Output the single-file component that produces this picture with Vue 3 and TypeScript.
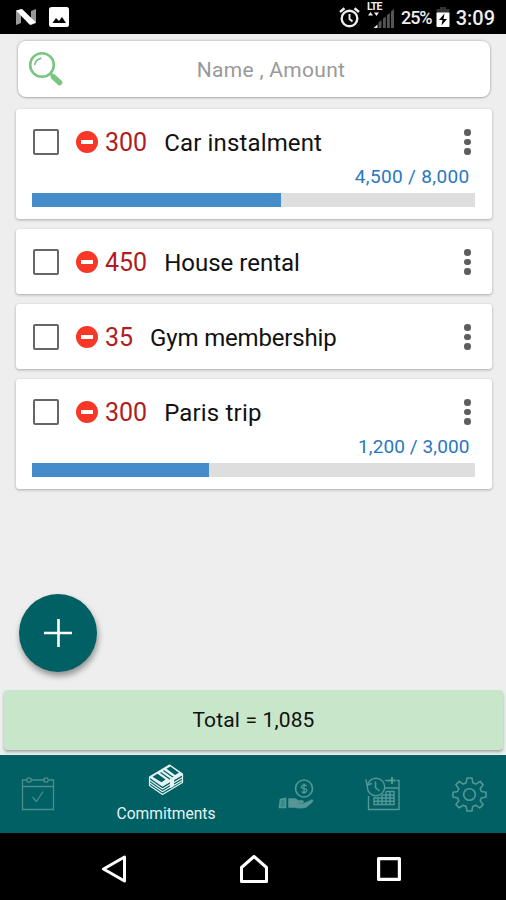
<script setup lang="ts">
interface Commitment {
  amount: string
  name: string
  kind: 'car' | 'house' | 'gym' | 'trip'
  paid?: number
  total?: number
}

const commitments: Commitment[] = [
  { amount: '300', name: 'Car instalment', kind: 'car', paid: 4500, total: 8000 },
  { amount: '450', name: 'House rental', kind: 'house' },
  { amount: '35', name: 'Gym membership', kind: 'gym' },
  { amount: '300', name: 'Paris trip', kind: 'trip', paid: 1200, total: 3000 },
]

const format = (n: number): string => n.toLocaleString('en-US')
const percent = (c: Commitment): string => `${((c.paid ?? 0) / (c.total ?? 1)) * 100}%`
</script>

<template>
  <div class="screen">
    <header class="status">
      <svg class="status-n" viewBox="0 0 22 18" width="22" height="18">
        <path d="M1 3l5-2v14l-5 2zM16 3l5-2v14l-5 2z" fill="#999" />
        <path d="M1 2.500L7 1l14 13.500L15 17z" fill="#fff" />
      </svg>
      <svg class="status-pic" viewBox="0 0 20 20" width="20" height="20">
        <rect width="20" height="20" rx="2.500" fill="#fff" />
        <path d="M3.500 16l3.500-5 3 3 3-4 4 6z" fill="#000" />
      </svg>
      <span class="grow"></span>
      <svg class="alarm" viewBox="0 0 21 21" width="21" height="21" fill="none" stroke="#eee">
        <circle cx="10.500" cy="11.500" r="7.800" stroke-width="2.400" />
        <path d="M10.500 7v5l3 2.500" stroke-width="1.900" />
        <path d="M1 5l4.500-3.700M20 5l-4.500-3.700" stroke-width="2.400" />
      </svg>
      <span class="signal">
        <svg viewBox="0 0 28 26" width="28" height="26">
          <path d="M6.500 26l4-3.500V26zM1 13.500l2.500-3.500L6 13.500zM7 10.500h5l-2.500 3.500z" fill="#eee" />
          <path d="M11.500 20.500l3-2.500v8h-3zM16 16.500l2.800-2v11.500H16zM20 13l2.800-2v15H20zM24 9.500l3-2.500v19h-3z" fill="#555" />
        </svg>
        <b class="lte">LTE</b>
      </span>
      <span class="battery-text">25%</span>
      <svg class="battery" viewBox="0 0 14 22" width="14" height="22">
        <path d="M4 1h6v2h3.500v4H.5V3H4z" fill="#333" />
        <rect x=".5" y="6.500" width="13" height="14.500" rx="1" fill="#fff" />
        <path d="M8.500 7.500L3 14h3.500L5.500 19.500 11 13H7.500z" fill="#000" />
      </svg>
      <span class="clock">3:09</span>
    </header>

    <main class="content">
      <div class="search">
        <svg class="magnifier" viewBox="0 0 36 36" width="36" height="36" fill="none" stroke="#7ac581">
          <circle cx="14" cy="14" r="11.800" stroke-width="2.600" />
          <path d="M6.800 13.500Q7.500 8.500 12.800 7.300" stroke-width="1.700" stroke-linecap="round" />
          <path d="M22.500 22.500l3 3" stroke-width="3" />
          <path d="M25.500 26l6 5.500" stroke-width="5.600" stroke-linecap="round" />
        </svg>
        <span class="placeholder">Name , Amount</span>
      </div>

      <section class="list">
        <article v-for="c in commitments" :key="c.name" class="card">
          <div class="row">
            <span class="checkbox"></span>
            <span class="minus"></span>
            <span class="amount">{{ c.amount }}</span>
            <span class="name" :class="c.kind">{{ c.name }}</span>
            <span class="grow"></span>
            <span class="dots"><i></i><i></i><i></i></span>
          </div>
          <template v-if="c.total && c.paid">
            <div class="figures" :class="c.kind">{{ format(c.paid) }} / {{ format(c.total) }}</div>
            <div class="track"><div class="fill" :style="{ width: percent(c) }"></div></div>
          </template>
        </article>
      </section>

      <span class="grow"></span>
      <div class="fab">
        <svg viewBox="0 0 28 28" width="28" height="28" stroke="#fff" stroke-width="2.600">
          <path d="M14.500 0v28M0 14h28" />
        </svg>
      </div>
      <div class="total">Total = 1,085</div>
    </main>

    <nav class="tabs">
      <div class="tab tab-calendar">
        <svg viewBox="0 0 34 36" width="34" height="36" fill="none" stroke="#4c8d8d" stroke-width="1.300">
          <path d="M6 4H1.500v29.500h31V4H28M10 4h14M1.500 10.500h31" />
          <circle cx="8" cy="4" r="2.200" />
          <circle cx="25" cy="4" r="2.200" />
          <path d="M11.500 21l4 4.500 6.500-10" />
        </svg>
      </div>
      <div class="tab tab-active">
        <svg viewBox="0 0 36 34" width="36" height="34" fill="none" stroke="#e6f3f3" stroke-width="1.200" stroke-linejoin="round">
          <path d="M1.500 14L21.500 2 34.500 11 14.500 23z" fill="#e6f3f3" />
          <path d="M4.500 13.800l5-3 8 5.700-4 2.800zM18.500 5.700l4-2.200 8.500 6.200-4 2.400z" fill="#006064" stroke="none" />
          <path d="M12.500 9.500l10 7M15.500 7.500l10 7" stroke="#006064" stroke-width="1.200" />
          <path d="M1.500 14v8.500l13 9 20-12V11" />
          <path d="M1.500 17l13 9 9-5.500M1.500 19.700l13 9 9-5.500M26 16.500l8.500-5M26 19.500l8.500-5M26 22.300l8.500-5" stroke-width="1.200" />
          <path d="M22.500 16.500v8l3-1.800v-8.200z" fill="#e6f3f3" />
        </svg>
        <span class="tab-label">Commitments</span>
      </div>
      <div class="tab tab-hand">
        <svg viewBox="0 0 36 31" width="36" height="31" fill="none" stroke="#559797" stroke-width="1.600">
          <circle cx="26" cy="9.500" r="8.500" />
          <path d="M28.800 7q-2.800-2-4.800 0t2 2.700 2.300 2.800-4.800.3M26 4.500v10.500" stroke-width="1.300" />
          <path d="M2.500 20.500l5-1v9h-6z" fill="#37898a" />
          <path d="M10.500 19.500h7l3 2h4.500q1.500 2-1 2.500h-4.500q5 1.500 8.500-.5l6-3q2 .5 0 3l-6 5q-7 1.500-12 0h-5.500z" fill="#559797" stroke-width=".5" />
        </svg>
      </div>
      <div class="tab tab-history">
        <svg viewBox="0 0 36 36" width="36" height="36" fill="none" stroke="#559797" stroke-width="1.400">
          <path d="M3.500 20v13.500H34V4.500h-2.500M20 4.500h4M20 12h14" />
          <path d="M27 1v7M23.500 4.500h7" stroke-width="2" />
          <circle cx="11" cy="11" r="8.700" />
          <path d="M10.500 5.500v6l4 3.500" stroke-width="1.600" />
          <path d="M1 3.500l1 5.500 5-1.500" />
          <path d="M21 15.500h8v13H9V22h20M21 15.500v13M25 15.500v13M17 19v9.500M13 22v6.500M17 19h12M9 25.300h20" />
        </svg>
      </div>
      <div class="tab tab-settings">
        <svg viewBox="0 0 36 36" width="35" height="35" fill="none" stroke="#559797" stroke-width="1.600" stroke-linejoin="round">
          <circle cx="18" cy="18" r="6" />
          <path d="M15.500 1h5l1 5 3 1.300L29 4.500 32 8l-3 4 1.200 2.900 4.800.8v4.800l-4.800 1L29 24.300l3 4.200-3.500 3.300-4-2.800-3.200 1.300-.8 4.700h-5l-1-4.700-3-1.300-4 2.800L4 28.500l3-4.200-1.300-2.800-4.700-1v-4.800l4.700-.8L7 12 4 8l3.500-3.500 4 2.800 3-1.300z" />
        </svg>
      </div>
    </nav>

    <footer class="system">
      <svg viewBox="0 0 26 28" width="26" height="28" fill="none" stroke="#fff" stroke-width="3" stroke-linejoin="round">
        <path d="M23.500 2v24L2.500 14z" />
      </svg>
      <svg class="home" viewBox="0 0 30 30" width="30" height="30" fill="none" stroke="#fff" stroke-width="3" stroke-linejoin="round">
        <path d="M15 2.500L2.500 13.500V27.500h25V13.500z" />
      </svg>
      <svg viewBox="0 0 26 26" width="26" height="26" fill="none" stroke="#fff" stroke-width="3.200" stroke-linejoin="round">
        <rect x="2.600" y="2.600" width="20.800" height="20.800" />
      </svg>
    </footer>
  </div>
</template>

<style>
body {
  margin: 0;
}
</style>

<style scoped>
.screen {
  box-sizing: border-box;
  width: 506px;
  height: 900px;
  display: flex;
  flex-direction: column;
  overflow: hidden;
  background: #eee;
  font-family: Roboto, "Liberation Sans", sans-serif;
  color: #111;
}
.grow {
  flex: 1;
}
.status {
  height: 34px;
  flex: none;
  box-sizing: border-box;
  padding: 0 11px 0 15px;
  display: flex;
  align-items: center;
  background: #000;
  color: #eee;
}
.status-pic {
  margin-left: 12px;
}
.alarm {
  margin-right: 7px;
}
.signal {
  position: relative;
  width: 28px;
  height: 26px;
  margin: -4px 6px 0 0;
}
.lte {
  position: absolute;
  left: 0;
  top: -1px;
  font-size: 10.5px;
  line-height: 11px;
  letter-spacing: -0.7px;
}
.battery-text {
  font-size: 18px;
  font-weight: 500;
  letter-spacing: -1px;
  line-height: 36px;
  margin-right: 4px;
  padding-top: 2px;
}
.battery {
  margin-right: 6px;
}
.clock {
  font-size: 20px;
  font-weight: 500;
  line-height: 36px;
  padding-top: 2px;
}
.content {
  flex: 1;
  display: flex;
  flex-direction: column;
  box-sizing: border-box;
  padding: 7px 3px 5px 4px;
}
.search {
  height: 56px;
  margin: 0 13px 0 14px;
  box-sizing: border-box;
  padding-left: 10px;
  display: flex;
  align-items: center;
  background: #fff;
  border-radius: 8px;
  box-shadow: 0 0 2px 1px rgba(0, 0, 0, 0.15), 0 1px 2px rgba(0, 0, 0, 0.15);
}
.placeholder {
  flex: 1;
  text-align: center;
  color: #999;
  font-size: 21px;
  letter-spacing: 0.3px;
  padding-right: 12px;
  padding-top: 2px;
}
.list {
  display: flex;
  flex-direction: column;
  gap: 10px;
  margin: 12px 11px 0 12px;
}
.card {
  box-sizing: border-box;
  min-height: 65px;
  padding: 18px 17px 12px 16px;
  background: #fff;
  border-radius: 3px;
  box-shadow: 0 1px 3px rgba(0, 0, 0, 0.28), 0 0 1px rgba(0, 0, 0, 0.1);
}
.row {
  height: 30px;
  display: flex;
  align-items: center;
}
.checkbox {
  box-sizing: border-box;
  width: 26px;
  height: 26px;
  margin-left: 1px;
  border: 2.5px solid #666;
  border-radius: 2px;
}
.minus {
  width: 22px;
  height: 22px;
  margin: 0 7px 0 17px;
  border-radius: 50%;
  background: #f83726;
  display: flex;
  align-items: center;
  justify-content: center;
}
.minus::before {
  content: "";
  width: 12px;
  height: 4px;
  background: #fff;
}
.amount {
  color: #b01c20;
  font-size: 25px;
  line-height: 30px;
  padding-top: 2px;
}
.name {
  margin-left: 17px;
  font-size: 24px;
  line-height: 30px;
  white-space: nowrap;
  padding-top: 1px;
}
.name.car {
  letter-spacing: 0.15px;
}
.name.house {
  letter-spacing: 0;
}
.name.gym {
  letter-spacing: -0.17px;
}
.name.trip {
  letter-spacing: 0.17px;
}
.dots {
  width: 7px;
  margin-right: 4px;
  display: grid;
  gap: 3px;
}
.dots i {
  width: 6.5px;
  height: 6.5px;
  border-radius: 50%;
  background: #5e5e5e;
}
.figures {
  height: 22px;
  margin-top: 9px;
  padding-right: 5.5px;
  text-align: right;
  color: #2878c0;
  font-size: 19px;
  line-height: 22px;
  letter-spacing: 0.35px;
}
.figures.trip {
  letter-spacing: 0.1px;
}
.track {
  height: 14px;
  margin-top: 5px;
  background: #dedede;
}
.fill {
  height: 100%;
  background: #448dca;
}
.fab {
  width: 78px;
  height: 78px;
  margin: 0 0 18px 15px;
  border-radius: 50%;
  background: #006064;
  box-shadow: 1px 4px 6px rgba(0, 0, 0, 0.4);
  display: flex;
  align-items: center;
  justify-content: center;
}
.total {
  height: 60px;
  line-height: 61px;
  text-align: center;
  background: #c8e6c9;
  border-radius: 4px;
  box-shadow: 0 2px 3px rgba(0, 0, 0, 0.3);
  font-size: 21px;
  letter-spacing: 0.15px;
}
.tabs {
  height: 78px;
  flex: none;
  display: grid;
  grid-template-columns: 75px 182px 78px 96px 77px;
  background: #006064;
}
.tab {
  display: flex;
  align-items: center;
  justify-content: center;
}
.tab-active {
  flex-direction: column;
  justify-content: flex-start;
  padding-top: 8px;
}
.tab-label {
  margin-top: 6px;
  color: #e6f3f3;
  font-size: 15.6px;
  line-height: 22px;
}
.system {
  height: 67px;
  flex: none;
  display: flex;
  align-items: center;
  padding: 4px 0 0 101px;
  background: #000;
  box-sizing: border-box;
}
.home {
  margin: 0 107px 0 112px;
}
</style>
